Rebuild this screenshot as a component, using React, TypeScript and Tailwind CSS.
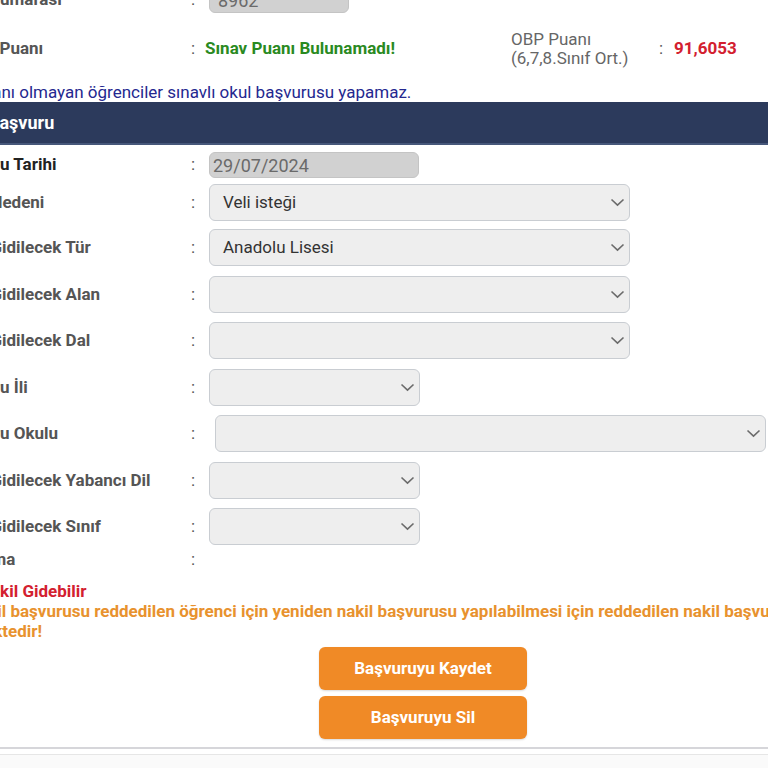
import React from "react";

function Chevron() {
  return (
    <svg width="15" height="9" viewBox="0 0 15 9" className="shrink-0">
      <polyline points="1.5,1.5 7.5,7.2 13.5,1.5" fill="none" stroke="#6b6b6b" strokeWidth="1.6" />
    </svg>
  );
}

function Select({ value, width, ml = "" }: { value?: string; width: string; ml?: string }) {
  return (
    <div
      className={`${width} ${ml} h-[37px] flex items-center justify-between rounded-[6px] border border-[#c9cdd2] bg-[#eeeeee] pl-[13px] pr-[4px] text-[17px] text-[#333]`}
    >
      <span>{value ?? ""}</span>
      <Chevron />
    </div>
  );
}

type Row = { label: string; off: string; mt: string; dark?: boolean; field: React.ReactNode };

const rows: Row[] = [
  {
    label: "Başvuru Tarihi",
    off: "-ml-[53px]",
    mt: "mt-[7px]",
    dark: true,
    field: (
      <div className="w-[210px] h-[26px] flex items-center rounded-[6px] bg-[#d1d1d1] border border-[#c4c4c4] pl-[3px] text-[18px] text-[#6a6a6a]">
        29/07/2024
      </div>
    ),
  },
  { label: "Nakil Nedeni", off: "-ml-[53px]", mt: "mt-[6px]", field: <Select value="Veli isteği" width="w-[421px]" /> },
  { label: "Nakil Gidilecek Tür", off: "-ml-[53px]", mt: "mt-[8px]", field: <Select value="Anadolu Lisesi" width="w-[421px]" /> },
  { label: "Nakil Gidilecek Alan", off: "-ml-[53px]", mt: "mt-[10px]", field: <Select width="w-[421px]" /> },
  { label: "Nakil Gidilecek Dal", off: "-ml-[53px]", mt: "mt-[9px]", field: <Select width="w-[421px]" /> },
  { label: "Başvuru İli", off: "-ml-[53px]", mt: "mt-[10px]", field: <Select width="w-[211px]" /> },
  { label: "Başvuru Okulu", off: "-ml-[53px]", mt: "mt-[9px]", field: <Select width="w-[551px]" ml="ml-[6px]" /> },
  { label: "Nakil Gidilecek Yabancı Dil", off: "-ml-[53px]", mt: "mt-[10px]", field: <Select width="w-[211px]" /> },
  { label: "Nakil Gidilecek Sınıf", off: "-ml-[53px]", mt: "mt-[9px]", field: <Select width="w-[211px]" /> },
];

export default function App() {
  return (
    <div className="w-[768px] h-[768px] overflow-hidden bg-white font-['Roboto',sans-serif]">
      {/* top info */}
      <div className="flex h-[26px] -mt-[13px] items-center">
        <div className="w-[191px] whitespace-nowrap text-[17px] font-bold text-[#555]">
          <span className="-ml-[51px] inline-block">Okul Numarası</span>
        </div>
        <div className="w-[18px] text-[17px] text-[#555]">:</div>
        <div className="w-[140px] h-[26px] flex items-center rounded-[6px] bg-[#d1d1d1] border border-[#c4c4c4] pl-[8px] text-[18px] text-[#6a6a6a]">
          8962
        </div>
      </div>

      <div className="flex mt-[17px] h-[38px] items-center">
        <div className="w-[191px] whitespace-nowrap text-[17px] font-bold text-[#555]">
          <span className="-ml-[47px] inline-block">Sınav Puanı</span>
        </div>
        <div className="w-[14px] text-[17px] text-[#555]">:</div>
        <div className="w-[306px] text-[17px] font-bold text-[#2a8a1f]">Sınav Puanı Bulunamadı!</div>
        <div className="w-[148px] text-[17px] leading-[19px] text-[#666]">
          OBP Puanı
          <br />
          (6,7,8.Sınıf Ort.)
        </div>
        <div className="w-[15px] text-[17px] text-[#555]">:</div>
        <div className="text-[17px] font-bold text-[#d3202f]">91,6053</div>
      </div>

      <div className="mt-[15px] h-[20px] flex items-center whitespace-nowrap text-[17px] text-[#24288f]">
        <span className="-ml-[72px]">Sınav puanı olmayan öğrenciler sınavlı okul başvurusu yapamaz.</span>
      </div>

      {/* section header */}
      <div className="-mt-[1px] h-[43px] flex items-center bg-[#2c3a5c] border-b-2 border-[#46577a]">
        <span className="-ml-[12px] text-[18px] font-bold text-white">Başvuru</span>
      </div>

      {/* form rows */}
      {rows.map((r) => (
        <div key={r.label} className={`flex items-center ${r.mt}`}>
          <div className={`w-[191px] whitespace-nowrap text-[17px] font-bold ${r.dark ? "text-[#222]" : "text-[#555]"}`}>
            <span className={`${r.off} inline-block`}>{r.label}</span>
          </div>
          <div className="w-[18px] text-[17px] text-[#555]">:</div>
          {r.field}
        </div>
      ))}

      <div className="flex h-[16px] mt-[7px] items-center">
        <div className="w-[191px] whitespace-nowrap text-[17px] font-bold text-[#555]">
          <span className="-ml-[56px] inline-block">Açıklama</span>
        </div>
        <div className="w-[18px] text-[17px] text-[#555]">:</div>
      </div>

      {/* notes */}
      <div className="mt-[13px] whitespace-nowrap text-[17px] font-bold leading-[20px]">
        <div className="text-[#d3202f]">
          <span className="-ml-[21px] inline-block">Nakil Gidebilir</span>
        </div>
        <div className="text-[#e8922e]">
          <span className="-ml-[33px] inline-block">
            Nakil başvurusu reddedilen öğrenci için yeniden nakil başvurusu yapılabilmesi için reddedilen nakil başvurusunun silinmesi
          </span>
        </div>
        <div className="text-[#e8922e]">
          <span className="-ml-[74px] inline-block">gerekmektedir!</span>
        </div>
      </div>

      {/* buttons */}
      <div className="mt-[6px] flex flex-col items-center gap-[6px] pl-[78px]">
        <button className="w-[208px] h-[43px] rounded-[6px] bg-[#f08a26] text-[17px] font-bold text-white shadow-[0_1px_2px_rgba(0,0,0,0.15)]">
          Başvuruyu Kaydet
        </button>
        <button className="w-[208px] h-[43px] rounded-[6px] bg-[#f08a26] text-[17px] font-bold text-white shadow-[0_1px_2px_rgba(0,0,0,0.15)]">
          Başvuruyu Sil
        </button>
      </div>

      <div className="mt-[8px] h-[2px] bg-[#d6d6da]" />
      <div className="mt-[5px] h-[1px] bg-[#e6e6e6]" />
      <div className="h-[20px] bg-[#fafafa]" />
    </div>
  );
}
